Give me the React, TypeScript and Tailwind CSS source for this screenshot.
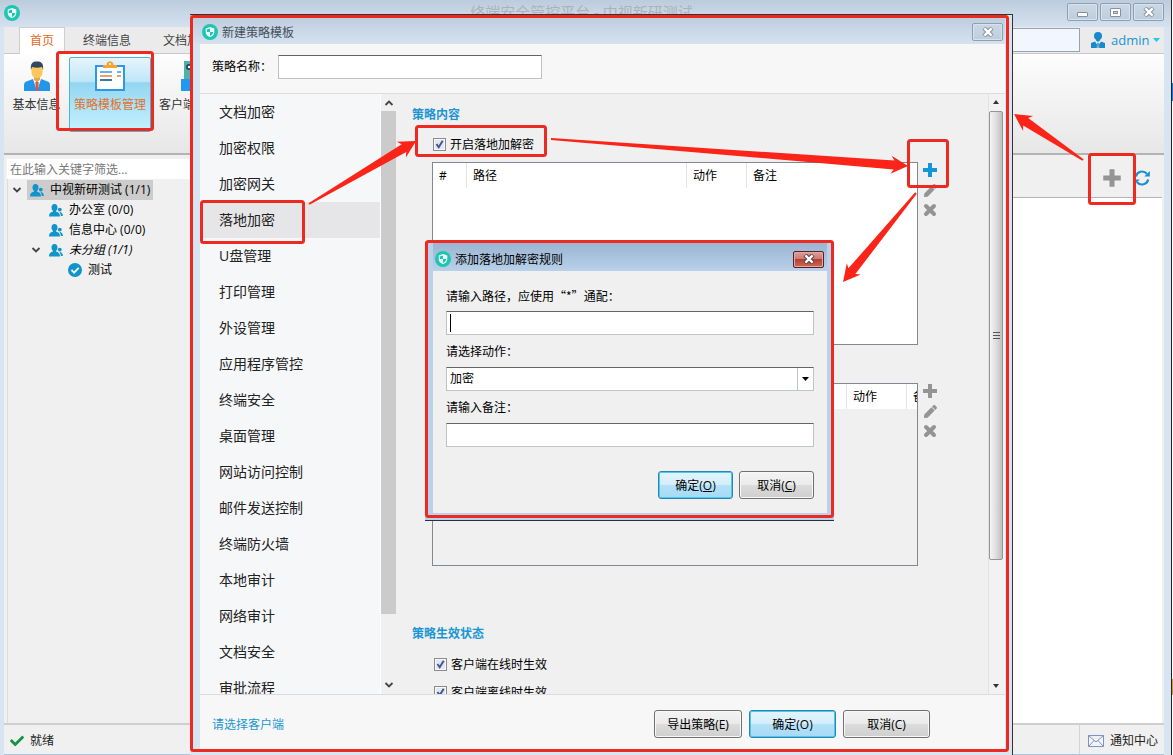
import React from "react";
import { FaCheck, FaPen } from "react-icons/fa";

const navItems = [
  "文档加密", "加密权限", "加密网关", "落地加密", "U盘管理", "打印管理", "外设管理", "应用程序管控", "终端安全",
  "桌面管理", "网站访问控制", "邮件发送控制", "终端防火墙", "本地审计", "网络审计", "文档安全", "审批流程",
];

function Logo() {
  return (
    <svg viewBox="0 0 16 16" className="size-4 shrink-0" aria-hidden="true">
      <circle cx="8" cy="8" r="8" fill="#1fc5b0" />
      <path d="M8 3 12.3 4.5V8c0 2.6-1.8 4.2-4.3 5.3C5.500 12.200 3.700 10.600 3.700 8V4.500Z" fill="#eafffb" />
      <path d="M8 4.400V8H4.900V5.400ZM8 8h3.100c0 1.900-1.200 3-3.100 4Z" fill="#1fc5b0" />
    </svg>
  );
}

function CrossGlyph({ light = false }: { light?: boolean }) {
  return (
    <svg viewBox="0 0 12 10" className="h-[10px] w-3" aria-hidden="true">
      <path d="M2 1 10 9M10 1 2 9" stroke={light ? "#5c3b3b" : "#8491a1"} strokeWidth="4.400" />
      <path d="M2.400 1.400 9.600 8.600M9.600 1.400 2.400 8.600" stroke="#fff" strokeWidth="2.400" />
    </svg>
  );
}

const captionButton =
  "flex h-[18px] w-[31px] items-center justify-center rounded-[2px] border border-[#8f9fb2] bg-linear-to-b from-[#cbd7e4] to-[#bfcddc] shadow-[inset_0_0_0_1px_#d9e3ee]";

function Users() {
  return (
    <svg viewBox="0 0 14 13" className="h-[13px] w-[14px] shrink-0" fill="#0f94cc" aria-hidden="true">
      <ellipse cx="5.500" cy="3.600" rx="3" ry="3.500" />
      <path d="M0 12.500c0-3 1.500-4.200 4-4.900V6h3v1.600c2.500.7 4 1.900 4 4.900Z" />
      <circle cx="10.800" cy="5.600" r="1.900" />
      <path d="M10.300 7.700c2.300.2 3.500 1.600 3.600 4.300h-2.100c-.1-1.900-.6-3.100-1.500-4.300Z" />
    </svg>
  );
}

function Chevron({ up = false }: { up?: boolean }) {
  return (
    <svg viewBox="0 0 10 6" className="h-[6px] w-[10px] shrink-0" fill="none" stroke="#444" strokeWidth="1.800" aria-hidden="true">
      <path d={up ? "M1.500 5 5 1.500 8.500 5" : "M1.500 1 5 4.500 8.500 1"} />
    </svg>
  );
}

function Plus({ color }: { color: string }) {
  return (
    <svg viewBox="0 0 16 16" className="size-full" fill={color} aria-hidden="true">
      <path d="M6 1h4v5h5v4h-5v5H6v-5H1V6h5Z" />
    </svg>
  );
}

function EditTools({ active = false }: { active?: boolean }) {
  return (
    <div className="flex flex-col gap-1">
      <button aria-label="添加" className="size-4"><Plus color={active ? "#1496db" : "#949494"} /></button>
      <button aria-label="编辑" className="flex size-4 items-center justify-center text-[#949494]"><FaPen size={13} /></button>
      <button aria-label="删除" className="size-4">
        <svg viewBox="0 0 16 16" stroke="#949494" strokeWidth="4" strokeLinecap="round" aria-hidden="true">
          <path d="M4 4 12 12M12 4 4 12" />
        </svg>
      </button>
    </div>
  );
}

function CheckRow({ id, label }: { id: string; label: string }) {
  return (
    <div className="flex h-5 items-center gap-1">
      <span className="relative size-[13px]">
        <input id={id} type="checkbox" defaultChecked className="block size-[13px] appearance-none border border-[#8b8b8b] bg-[#e4e8ee] shadow-[inset_0_0_0_1px_#f8f8f8]" />
        <svg viewBox="0 0 13 13" className="pointer-events-none absolute inset-0" fill="none" stroke="#43579b" strokeWidth="2" aria-hidden="true">
          <path d="M3.500 6 5.700 9.200 9.700 2.800" />
        </svg>
      </span>
      <label htmlFor={id} className="pt-px">{label}</label>
    </div>
  );
}

function RuleTable({ muted = false }: { muted?: boolean }) {
  const cell = "border-r border-[#e3e3e3] px-1.5 text-left font-normal";
  return (
    <div className={`h-[183px] w-[486px] overflow-hidden border border-[#828790] ${muted ? "bg-[#f0f0f0]" : "bg-white"}`}>
      <table className={`table-fixed border-separate border-spacing-0 bg-white ${muted ? "w-[534px]" : "w-full"}`}>
        <thead>
          <tr className="h-[25px]">
            {muted ? (
              <th className={`${cell} w-[414px]`} />
            ) : (
              <>
                <th className={`${cell} w-[34px]`}>#</th>
                <th className={`${cell} w-[220px]`}>路径</th>
              </>
            )}
            <th className={`${cell} w-[60px]`}>动作</th>
            <th className="px-1.5 text-left font-normal">备注</th>
          </tr>
        </thead>
      </table>
    </div>
  );
}

function PushButton({ children, primary = false, className }: { children: React.ReactNode; primary?: boolean; className: string }) {
  return (
    <button
      className={`h-7 rounded-[3px] border pt-px ${
        primary
          ? "border-[#2c85ad] bg-[linear-gradient(#e3f4fc_0%,#d4eefb_48%,#b5e1f9_50%,#a5daf5_100%)] shadow-[inset_0_0_0_1px_#4cc8ee]"
          : "border-[#707070] bg-[linear-gradient(#f3f3f3_0%,#ebebeb_48%,#dcdcdc_50%,#cfcfcf_100%)] shadow-[inset_0_0_0_1px_#f8f8f8]"
      } ${className}`}
    >
      {children}
    </button>
  );
}

function MainWindow() {
  return (
    <div className="flex h-full bg-[#d7e4f2]">
      <div className="flex min-w-0 flex-1 flex-col">
        <header className="flex h-[27px] shrink-0 items-start justify-between bg-linear-to-b from-[#bdccdc] to-[#d4e1ef] pr-[7px] pl-1">
          <div className="flex w-[92px] pt-[5px]"><Logo /></div>
          <h1 className="pt-[2px] text-[15px] leading-[20px] text-[#a9b3be]">终端安全管控平台 - 中视新研测试</h1>
          <div className="flex gap-[2px] pt-[3px]">
            <button aria-label="最小化" className={captionButton}><span className="mt-1 h-[5px] w-[11px] rounded-[1px] border border-[#8491a1] bg-white" /></button>
            <button aria-label="最大化" className={captionButton}><span className="h-[9px] w-[11px] rounded-[1px] border border-[#8491a1] bg-white p-[2px]"><span className="block h-[3px] w-[5px] border border-[#8491a1] bg-[#c6d3e1]" /></span></button>
            <button aria-label="关闭" className={captionButton}><CrossGlyph /></button>
          </div>
        </header>

        <div className="mr-[7px] ml-1 flex min-h-0 flex-1 flex-col bg-[#f0f0f0]">
          <div className="flex h-[27px] shrink-0 items-end justify-between border-b border-[#c8c8c8] bg-[#ebebeb]">
            <nav className="flex h-[26px] items-stretch pl-[15px]">
              <button className="-mb-px w-[46px] border-x border-t border-[#cfcfcf] bg-white text-[#e4681c]">首页</button>
              <button className="w-[84px] pt-px text-[#444]">终端信息</button>
              <button className="w-[76px] pt-px text-[#444]">文档加密</button>
            </nav>
            <div className="flex h-[26px] items-center">
              <input aria-label="搜索" className="h-6 w-[150px] border border-[#9aa2ad] bg-[#f2f6ff]" />
              <button className="flex h-full w-[84px] items-center gap-1.5 pl-[11px] text-[13px] text-[#1a93d6]">
                <svg viewBox="0 0 14 16" className="h-4 w-[14px]" fill="#1a88cc" aria-hidden="true">
                  <ellipse cx="7" cy="4" rx="4" ry="4" />
                  <path d="M5 7h4v1.500L7 10 5 8.500Z" />
                  <path d="M4 9.500 0 11V16h5.800l.2-3.500ZM10 9.500 14 11V16H8.200L8 12.500ZM7 10.500l.8 1L7.500 16h-1L6.200 11.500Z" />
                </svg>
                admin
                <svg viewBox="0 0 7 4" className="-ml-0.5 h-1 w-[7px]" fill="#28c5ee" aria-hidden="true"><path d="M0 0h7L3.500 4Z" /></svg>
              </button>
            </div>
          </div>

          <div className="flex h-[101px] shrink-0 items-start border-b-2 border-[#b3b3b3] bg-linear-to-b from-[#fdfdfd] to-[#e7e7e7] pt-[3px]">
            <button className="flex h-[75px] w-[65px] flex-col items-center gap-1.5 pt-1 whitespace-nowrap text-[#333]">
              <svg viewBox="0 0 26 30" className="h-[30px] w-[26px]" aria-hidden="true">
                <path d="M0 30v-6c0-2 1-3 3-3.700L9 18h8l6 2.300c2 .7 3 1.700 3 3.700v6Z" fill="#2396e8" />
                <path d="M9 18h8l-4 12Z" fill="#fff" /><path d="m13 19.500 1.700 2-.7 8.500h-2l-.7-8.500Z" fill="#dc5845" />
                <path d="M10 14h6v5l-3 2-3-2Z" fill="#e9a848" />
                <path d="M7.500 8c0-4 11-4 11 0v3c0 8-11 8-11 0Z" fill="#ffc65c" />
                <path d="M7 9C6 2 9 .5 13 .5S20 2 19 9l-1-3c-3 1-7 1-10 0Z" fill="#33485f" />
              </svg>
              <span>基本信息</span>
            </button>
            <button className="flex h-[75px] w-[82px] flex-col items-center gap-1.5 rounded-[2px] border border-[#4fb5cf] bg-[linear-gradient(#e6f5fc_0%,#bfe6f7_32%,#93d6f2_34%,#c5f1fd_100%)] pt-[3px] whitespace-nowrap text-[#e4702a]">
              <svg viewBox="0 0 30 30" className="size-[30px]" aria-hidden="true">
                <path d="M1 5h28v24H1Z" fill="#fff" stroke="#2f97e8" strokeWidth="2" />
                <path d="M8 7V4h3.500c0-5 7-5 7 0H22v3Z" fill="#f7a233" /><circle cx="15" cy="3" r="1.100" fill="#fff" />
                <path d="M5 11h12M22 11h4" stroke="#62b3f0" strokeWidth="1.800" />
                <path d="M5 15h12M22 15h4" stroke="#f3a05a" strokeWidth="1.800" />
                <path d="M5 19h12" stroke="#2a6a98" strokeWidth="1.800" />
              </svg>
              <span>策略模板管理</span>
            </button>
            <button className="flex h-[75px] w-[76px] flex-col items-center gap-1.5 pt-1 whitespace-nowrap text-[#333]">
              <svg viewBox="0 0 16 30" className="h-[30px] w-4" aria-hidden="true">
                <path d="M3 0h10v18H3Z" fill="#4db2ad" /><circle cx="8" cy="6" r="3" fill="#26435c" /><circle cx="8" cy="6" r="1.200" fill="#fff" />
                <path d="M0 18h16v12H0Z" fill="#2398ef" />
              </svg>
              <span>客户端管理</span>
            </button>
          </div>

          <div className="flex min-h-0 flex-1">
            <aside className="flex w-[240px] flex-col pt-1 pl-[3px]">
              <input aria-label="筛选" placeholder="在此输入关键字筛选..." className="h-5 bg-white px-[3px] placeholder:text-[#777]" />
              <ul className="min-h-0 flex-1 border-l border-[#ddd] pt-[1px]">
                <li className="flex h-5 items-center gap-[5px] pl-1">
                  <Chevron />
                  <span className="flex h-5 items-center gap-1.5 bg-[#ccc] px-[3px]"><Users />中视新研测试 (1/1)</span>
                </li>
                <li className="flex h-5 items-center gap-1.5 pl-[41px]"><Users />办公室 (0/0)</li>
                <li className="flex h-5 items-center gap-1.5 pl-[41px]"><Users />信息中心 (0/0)</li>
                <li className="flex h-5 items-center gap-1.5 pl-[23px]"><Chevron /><span className="ml-0.5 flex items-center gap-1.5"><Users /><i>未分组 (1/1)</i></span></li>
                <li className="flex h-5 items-center gap-1.5 pl-[60px]">
                  <svg viewBox="0 0 14 14" className="size-[14px]" aria-hidden="true"><circle cx="7" cy="7" r="7" fill="#0f94cc" /><path d="m3.500 7 2.600 2.600 4.600-4.800" fill="none" stroke="#fff" strokeWidth="1.800" /></svg>
                  测试
                </li>
              </ul>
            </aside>
            <main className="mr-[2px] flex flex-1 flex-col bg-white">
              <div className="flex h-[43px] items-center justify-end gap-3 border-b border-[#b5b5b5] bg-[#f0f0f0] pt-1 pr-3">
                <button aria-label="新建" className="size-5"><Plus color="#949494" /></button>
                <button aria-label="刷新" className="size-4">
                  <svg viewBox="0 0 16 16" aria-hidden="true">
                    <path d="M1.800 6.500A6.300 6.300 0 0 1 12.800 3.800M14.200 9.500A6.300 6.300 0 0 1 3.200 12.200" fill="none" stroke="#1a8fd0" strokeWidth="2.200" />
                    <path d="M15.800 1v5.500h-5.500ZM.2 15V9.500h5.500Z" fill="#1a8fd0" />
                  </svg>
                </button>
              </div>
            </main>
          </div>

          <footer className="flex h-[32px] shrink-0 items-center justify-between border-t-2 border-b border-t-[#cfcfcf] border-b-[#a9c7e4] bg-[#f0f0f0] text-[#222]">
            <span className="flex items-center gap-1.5 pt-0.5 pl-1.5"><FaCheck size={14} color="#159342" />就绪</span>
            <button className="flex h-full items-center gap-1.5 border-l border-[#d4d4d4] pt-0.5 pr-1.5 pl-2">
              <svg viewBox="0 0 16 12" className="h-3 w-4" fill="#f3f5ff" stroke="#8290bd" aria-hidden="true"><path d="M.5.500h15v11H.5ZM.5.500 8 7 15.500.500M.5 11.500 6 5.500M15.500 11.500 10 5.500" /></svg>
              通知中心
            </button>
          </footer>
        </div>
      </div>
      <div className="w-px bg-[#222]" />
      <div className="flex w-px flex-col bg-white pt-[83px]"><span className="h-[18px] bg-[#1479d8]" /><span className="mt-auto mb-[60px] h-4 bg-[#dc9830]" /></div>
    </div>
  );
}

function PolicyDialog() {
  return (
    <section role="dialog" aria-label="新建策略模板" className="absolute top-[14px] right-[160px] bottom-0 left-[190px] flex flex-col border-t border-r border-[#333] bg-[#d7e4f2] pr-[7px] pb-1.5">
      <header className="flex h-[29px] shrink-0 items-center justify-between bg-linear-to-b from-[#bccbdb] to-[#d5e2f0] pt-[5px] pl-3">
        <h2 className="flex h-4 items-center gap-1 text-[#444f5c]"><Logo /><span className="pt-0.5">新建策略模板</span></h2>
        <button aria-label="关闭" className={`${captionButton} mr-[2px]`}><CrossGlyph /></button>
      </header>
      <div className="ml-2.5 flex min-h-0 flex-1 flex-col bg-[#f0f0f0]">
        <div className="flex h-[50px] shrink-0 items-center gap-2 border-b border-[#dcdcdc] bg-[#f7f7f7] pb-1 pl-3">
          <label htmlFor="policy-name" className="w-[58px] whitespace-nowrap">策略名称：</label>
          <input id="policy-name" className="h-6 w-[264px] border border-[#bfc0c4] border-t-[#646464] bg-white px-1" />
        </div>

        <div className="flex min-h-0 flex-1 overflow-hidden">
          <nav className="w-[180px] shrink-0 bg-[#f5f7f9]">
            {navItems.map((item) => (
              <a key={item} href="#" className={`block h-9 pl-[19px] text-[14px] leading-9 text-[#222] ${item === "落地加密" ? "bg-[#e6e6e8]" : ""}`}>{item}</a>
            ))}
          </nav>
          <div className="flex w-4 shrink-0 flex-col items-center justify-between border-l border-white bg-[#f0f0f0] pt-1.5 pb-1.5">
            <Chevron up />
            <div className="mt-[5px] mb-[68px] w-full flex-1 bg-[#cbcbcb]" />
            <Chevron />
          </div>

          <div className="min-w-0 flex-1 pt-[11px] pl-4">
            <h3 className="h-5 leading-5 font-bold text-[#1c96d3]">策略内容</h3>
            <div className="mt-[9px] ml-[21px]"><CheckRow id="enable" label="开启落地加解密" /></div>
            <div className="mt-2 ml-5 flex gap-1"><RuleTable /><EditTools active /></div>
            <div className="mt-[38px] ml-5 flex gap-1"><RuleTable muted /><EditTools /></div>
            <h3 className="mt-[58px] h-5 leading-5 font-bold text-[#1c96d3]">策略生效状态</h3>
            <div className="mt-2.5 ml-[22px] flex flex-col gap-2">
              <CheckRow id="online" label="客户端在线时生效" />
              <CheckRow id="offline" label="客户端离线时生效" />
            </div>
          </div>

          <div className="flex w-[17px] shrink-0 flex-col items-center border-l border-[#e2e2e2] bg-[#f2f2f2] pt-1.5 pr-0.5 pb-1.5">
            <svg viewBox="0 0 6 4" className="h-1 w-1.5" fill="#333" aria-hidden="true"><path d="M0 4h6L3 0Z" /></svg>
            <div className="mt-[7px] mb-[124px] flex w-[14px] flex-1 flex-col items-center justify-center gap-[2px] rounded-[2px] border border-[#959595] bg-linear-to-r from-[#f5f5f5] via-[#dedede] to-[#bfbfc3]">
              <span className="h-px w-[7px] bg-[#555]" /><span className="h-px w-[7px] bg-[#555]" /><span className="h-px w-[7px] bg-[#555]" />
            </div>
            <svg viewBox="0 0 6 4" className="h-1 w-1.5" fill="#333" aria-hidden="true"><path d="M0 0h6L3 4Z" /></svg>
          </div>
        </div>

        <footer className="flex h-[55px] shrink-0 items-center justify-between border-t border-[#dcdcdc] bg-[#f7f7f7] pt-1 pl-3">
          <a href="#" className="pt-0.5 text-[#2196cf]">请选择客户端</a>
          <div className="flex gap-[7px] pr-[75px]">
            <PushButton className="w-[88px]">导出策略(E)</PushButton>
            <PushButton primary className="w-[87px]">确定(O)</PushButton>
            <PushButton className="w-[87px]">取消(C)</PushButton>
          </div>
        </footer>
      </div>
    </section>
  );
}

function RuleDialog() {
  const field = "block h-6 w-full border border-[#bfc4c4] border-t-[#646464] bg-white";
  return (
    <section role="dialog" aria-label="添加落地加解密规则" className="absolute top-[241px] left-[425px] w-[409px] border-b border-[#25303c] bg-[#b9d1ea] pr-[7px] pb-[7px] pl-2">
      <header className="flex h-[30px] items-center justify-between bg-linear-to-b from-[#98b3d0] to-[#b9d1ea] pt-1.5 pl-[2px]">
        <h2 className="flex h-4 items-center gap-1"><Logo /><span className="pt-0.5">添加落地加解密规则</span></h2>
        <button aria-label="关闭" className="mr-[3px] flex h-[17px] w-[31px] items-center justify-center rounded-[2px] border border-[#562024] bg-[linear-gradient(#dda09a_0%,#cc7770_48%,#b63f32_50%,#cc6a58_100%)] shadow-[inset_0_0_0_1px_#e0a9a2]"><CrossGlyph light /></button>
      </header>
      <div className="bg-[#f0f0f0] px-[13px] pt-4 pb-[14px]">
        <label htmlFor="rule-path" className="block h-[18px] leading-[18px]">请输入路径，应使用<span className="font-['Noto_Sans_CJK_SC',sans-serif]">“*”</span>通配：</label>
        <div className="relative mt-1.5">
          <input id="rule-path" className={`${field} px-[3px]`} />
          <span className="pointer-events-none absolute top-[3px] left-1 h-[18px] w-px bg-black" />
        </div>
        <label htmlFor="rule-action" className="mt-2 block h-[18px] leading-[18px]">请选择动作：</label>
        <div className="relative mt-1.5">
          <select id="rule-action" className={`${field} appearance-none px-[3px]`} defaultValue="加密"><option>加密</option></select>
          <span className="pointer-events-none absolute inset-y-px right-px flex w-4 items-center justify-center border-l border-[#bfc4c4]">
            <svg viewBox="0 0 7 4" className="h-1 w-[7px]" aria-hidden="true"><path d="M0 0h7L3.500 4Z" /></svg>
          </span>
        </div>
        <label htmlFor="rule-note" className="mt-2 block h-[18px] leading-[18px]">请输入备注：</label>
        <input id="rule-note" className={`${field} mt-1.5 px-[3px]`} />
        <div className="mt-6 flex justify-end gap-1.5">
          <PushButton primary className="w-[75px]">确定(<u>O</u>)</PushButton>
          <PushButton className="w-[75px]">取消(<u>C</u>)</PushButton>
        </div>
      </div>
    </section>
  );
}

type Point = [number, number];

function Arrow({ from, to }: { from: Point; to: Point }) {
  const length = Math.hypot(to[0] - from[0], to[1] - from[1]);
  const ux = (to[0] - from[0]) / length;
  const uy = (to[1] - from[1]) / length;
  const at = (back: number, side: number) => `${to[0] - ux * back - uy * side},${to[1] - uy * back + ux * side}`;
  const points = [at(length, 1), at(14, 4.5), at(17, 9), at(0, 0), at(17, -9), at(14, -4.5), at(length, -1)];
  return <polygon points={points.join(" ")} fill="#fb2418" />;
}

function Annotations() {
  return (
    <svg width="1173" height="755" className="pointer-events-none absolute top-0 left-0" aria-hidden="true">
      <g fill="none" stroke="#ee2a20" strokeWidth="3">
        <rect x="191.500" y="16.500" width="816" height="734" rx="2" />
        <rect x="57.500" y="52.500" width="95" height="77" rx="2" />
        <rect x="201.500" y="201.500" width="102" height="41" rx="2" />
        <rect x="416.500" y="126.500" width="129" height="29" rx="2" />
        <rect x="908.500" y="140.500" width="39" height="46" rx="2" />
        <rect x="1089.500" y="154.500" width="45" height="49" rx="2" />
        <rect x="426.500" y="241.500" width="406" height="275" rx="2" />
      </g>
      <Arrow from={[309, 204]} to={[416, 141]} />
      <Arrow from={[551, 139]} to={[908, 166]} />
      <Arrow from={[916, 193]} to={[843, 282]} />
      <Arrow from={[1083, 160]} to={[1014, 114]} />
    </svg>
  );
}

export default function App() {
  return (
    <div className="relative h-screen w-full overflow-hidden font-['Open_Sans','Noto_Sans_CJK_SC',sans-serif] text-[12px] leading-4 text-black">
      <MainWindow />
      <PolicyDialog />
      <RuleDialog />
      <Annotations />
    </div>
  );
}
